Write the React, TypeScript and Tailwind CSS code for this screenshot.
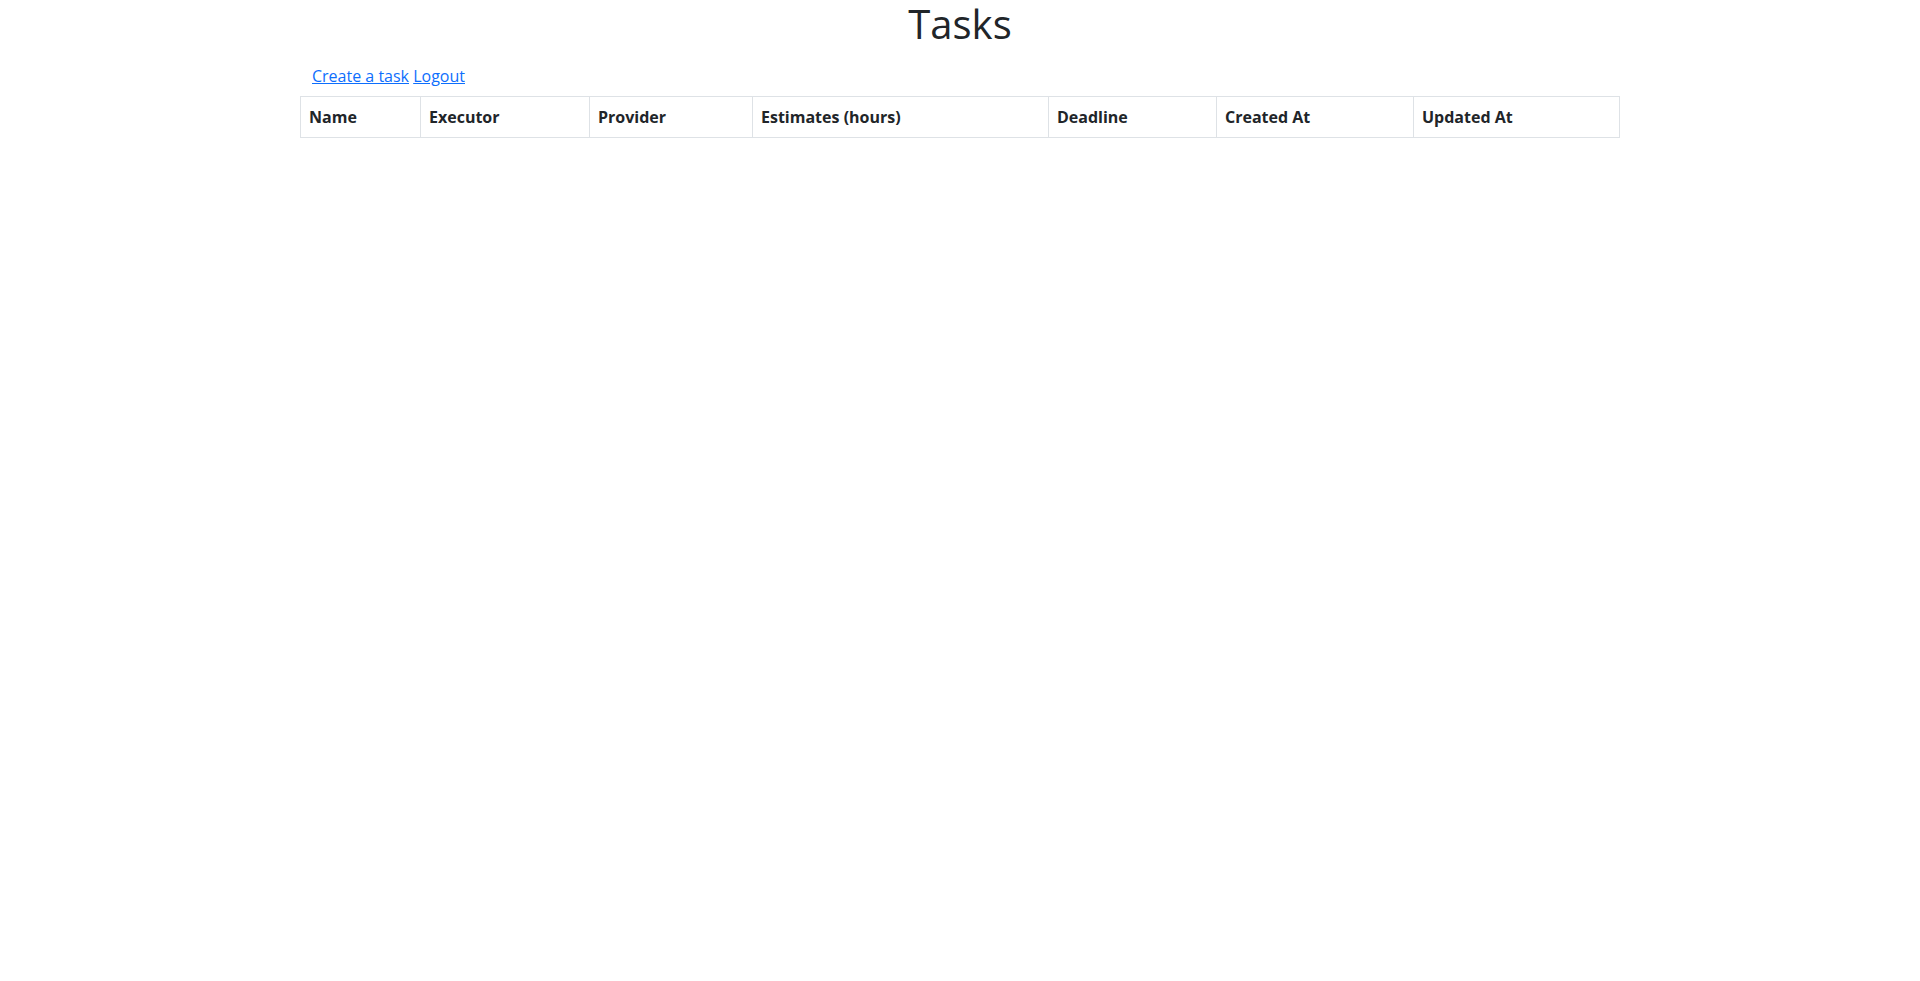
const columns = [
  { label: "Name", width: "w-[120px]" },
  { label: "Executor", width: "w-[169px]" },
  { label: "Provider", width: "w-[163px]" },
  { label: "Estimates (hours)", width: "w-[296px]" },
  { label: "Deadline", width: "w-[168px]" },
  { label: "Created At", width: "w-[197px]" },
  { label: "Updated At", width: "w-[206px]" },
];

const App = () => {
  return (
    <div className="min-h-screen bg-white text-[#212529] font-['Open_Sans',sans-serif]">
      <div className="w-[1320px] mx-auto">
        <h1 className="text-center text-[40px] leading-[48px] font-medium">Tasks</h1>
        <div className="mt-4 px-3 text-base leading-6">
          <a href="#" className="text-[#0d6efd] underline">Create a task</a>{" "}
          <a href="#" className="text-[#0d6efd] underline">Logout</a>
        </div>
        <table className="mt-2 w-[1319px] table-fixed border-collapse">
          <thead>
            <tr>
              {columns.map((col) => (
                <th
                  key={col.label}
                  className={`${col.width} border border-[#dee2e6] px-2 py-2 text-left text-base leading-6 font-bold`}
                >
                  {col.label}
                </th>
              ))}
            </tr>
          </thead>
          <tbody></tbody>
        </table>
      </div>
    </div>
  );
};

export default App;
